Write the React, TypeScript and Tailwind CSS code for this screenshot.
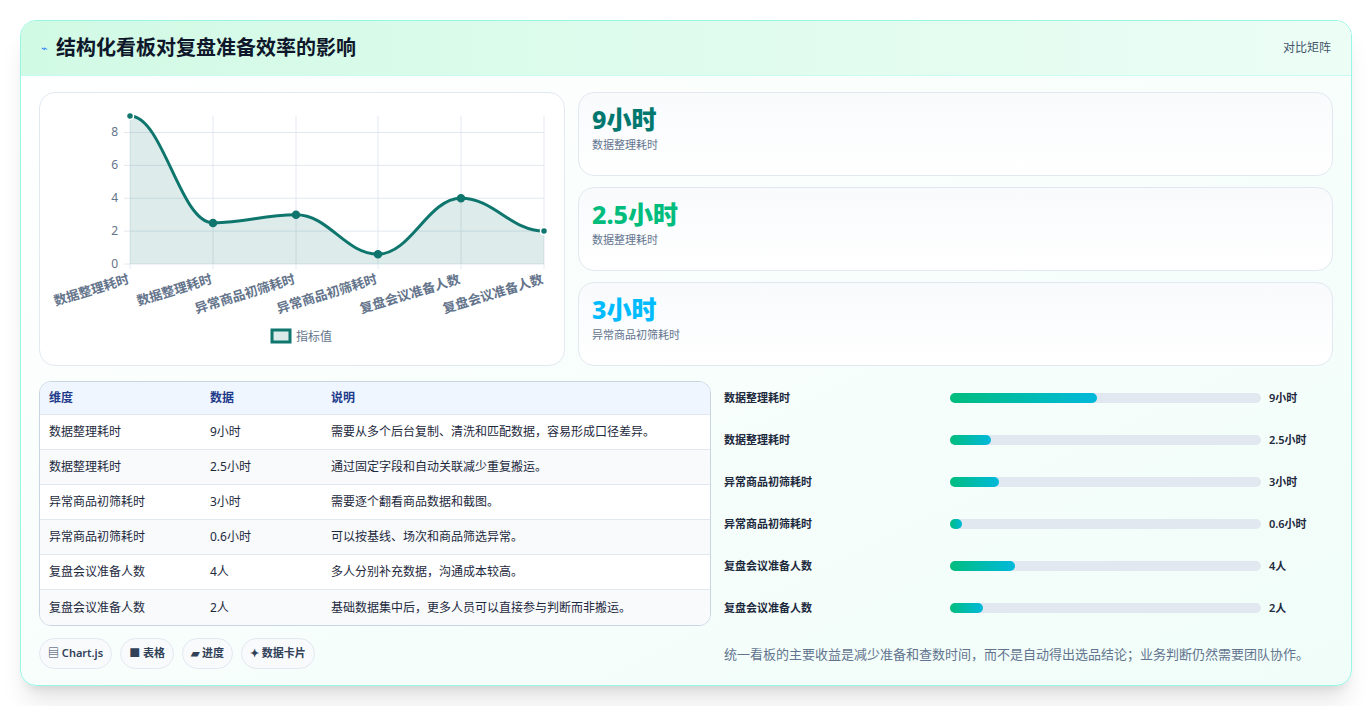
const FONT = { fontFamily: '"Noto Sans", "Noto Sans CJK SC", sans-serif' };

const rows = [
  { k: "数据整理耗时", v: "9小时", n: 9, d: "需要从多个后台复制、清洗和匹配数据，容易形成口径差异。" },
  { k: "数据整理耗时", v: "2.5小时", n: 2.5, d: "通过固定字段和自动关联减少重复搬运。" },
  { k: "异常商品初筛耗时", v: "3小时", n: 3, d: "需要逐个翻看商品数据和截图。" },
  { k: "异常商品初筛耗时", v: "0.6小时", n: 0.6, d: "可以按基线、场次和商品筛选异常。" },
  { k: "复盘会议准备人数", v: "4人", n: 4, d: "多人分别补充数据，沟通成本较高。" },
  { k: "复盘会议准备人数", v: "2人", n: 2, d: "基础数据集中后，更多人员可以直接参与判断而非搬运。" },
];

function Chart() {
  const xs = [90, 173, 256, 338, 421, 504];
  const y0 = 171;
  const u = 16.44;
  const pts = rows.map((r, i) => [xs[i], y0 - r.n * u]);
  let d = `M${pts[0][0]},${pts[0][1]}`;
  for (let i = 1; i < pts.length; i++) {
    const [x0, y0_] = pts[i - 1];
    const [x1, y1] = pts[i];
    const dx = (x1 - x0) * 0.4;
    d += ` C${x0 + dx},${y0_} ${x1 - dx},${y1} ${x1},${y1}`;
  }
  const area = `${d} L504,${y0} L90,${y0} Z`;
  return (
    <svg width="523" height="271" viewBox="0 0 523 271">
      {[0, 2, 4, 6, 8].map((t) => (
        <g key={t}>
          <line x1="84" x2="504" y1={y0 - t * u} y2={y0 - t * u} stroke="#e2e8f0" />
          <text x="78" y={y0 - t * u + 4} fontSize="12" fill="#64748b" textAnchor="end">{t}</text>
        </g>
      ))}
      {xs.map((x) => (
        <line key={x} x1={x} x2={x} y1="23" y2={y0 + 5} stroke="#e2e8f0" />
      ))}
      <path d={area} fill="#0f766e" fillOpacity="0.14" />
      <path d={d} fill="none" stroke="#0f766e" strokeWidth="3" />
      {pts.map(([x, y], i) => (
        <circle key={i} cx={x} cy={y} r="3.5" fill="#0f766e" stroke={i === 0 || i === 5 ? "#fff" : "#0f766e"} strokeWidth="1.5" />
      ))}
      {rows.map((r, i) => (
        <text key={i} x={xs[i]} y={y0 + 19} fontSize="13" fontWeight="700" fill="#64748b" textAnchor="end" transform={`rotate(-17 ${xs[i]} ${y0 + 19})`}>{r.k}</text>
      ))}
      <rect x="232" y="237" width="18" height="12" fill="#0f766e" fillOpacity="0.15" stroke="#0f766e" strokeWidth="3" />
      <text x="256" y="248" fontSize="12" fill="#64748b">指标值</text>
    </svg>
  );
}

export default function App() {
  return (
    <div className="min-h-[706px] bg-white p-5" style={FONT}>
      <div className="overflow-hidden rounded-2xl border border-teal-200 bg-gradient-to-br from-white to-[#f0fdf9] shadow-xl">
        <div className="flex h-[55px] items-center justify-between border-b border-teal-100 bg-gradient-to-r from-[#d1fae5] to-[#ecfdf5] px-5">
          <div className="flex items-center gap-2">
            <span className="text-[11px] text-blue-500">⌁</span>
            <h1 className="text-[20px] font-bold text-slate-900">结构化看板对复盘准备效率的影响</h1>
          </div>
          <span className="text-xs text-slate-600">对比矩阵</span>
        </div>
        <div className="px-[18px] pb-4 pt-4">
          <div className="flex gap-[13px]">
            <div className="h-[274px] w-[526px] shrink-0 rounded-2xl border border-slate-200 bg-white">
              <Chart />
            </div>
            <div className="flex flex-1 flex-col gap-[11px]">
              {[
                { v: "9小时", l: "数据整理耗时", c: "text-teal-700" },
                { v: "2.5小时", l: "数据整理耗时", c: "text-emerald-500" },
                { v: "3小时", l: "异常商品初筛耗时", c: "text-sky-400" },
              ].map((s, i) => (
                <div key={i} className="h-[84px] rounded-2xl border border-slate-200 bg-gradient-to-b from-[#f8fafc] to-white px-[13px] pt-2">
                  <div className={`text-[25px] font-extrabold leading-[36px] ${s.c}`}>{s.v}</div>
                  <div className="text-[11px] text-slate-500">{s.l}</div>
                </div>
              ))}
            </div>
          </div>
          <div className="mt-[15px] flex gap-[13px]">
            <div className="w-[672px] shrink-0">
              <div className="overflow-hidden rounded-xl border border-slate-300 bg-white text-xs">
                <div className="flex h-[33px] items-center border-b border-slate-200 bg-[#eff6ff] px-[9px] font-semibold text-[#1e3a8a]">
                  <span className="w-[161px]">维度</span>
                  <span className="w-[121px]">数据</span>
                  <span>说明</span>
                </div>
                {rows.map((r, i) => (
                  <div key={i} className={`flex h-[35px] items-center px-[9px] text-slate-800 ${i < 5 ? "border-b border-slate-200" : ""} ${i % 2 ? "bg-[#f8fafc]" : "bg-white"}`}>
                    <span className="w-[161px]">{r.k}</span>
                    <span className="w-[121px]">{r.v}</span>
                    <span>{r.d}</span>
                  </div>
                ))}
              </div>
              <div className="mt-3 flex gap-2">
                {["▤ Chart.js", "■ 表格", "▰ 进度", "✦ 数据卡片"].map((p) => (
                  <span key={p} className="rounded-full border border-slate-200 bg-[#f8fafc] px-2 py-[6px] text-[11px] font-semibold text-slate-700">{p}</span>
                ))}
              </div>
            </div>
            <div className="-mt-1 flex-1 pr-5">
              {rows.map((r, i) => (
                <div key={i} className="flex h-[42px] items-center text-[11px] font-semibold text-slate-800">
                  <span className="w-[226px]">{r.k}</span>
                  <div className="h-[10px] w-[311px] rounded-full bg-slate-200">
                    <div className="h-full rounded-full bg-gradient-to-r from-emerald-500 to-cyan-500" style={{ width: `${Math.max((r.n / 19) * 100, 4)}%` }} />
                  </div>
                  <span className="ml-2">{r.v}</span>
                </div>
              ))}
              <p className="mt-4 text-[13px] text-slate-500">统一看板的主要收益是减少准备和查数时间，而不是自动得出选品结论；业务判断仍然需要团队协作。</p>
            </div>
          </div>
        </div>
      </div>
    </div>
  );
}
